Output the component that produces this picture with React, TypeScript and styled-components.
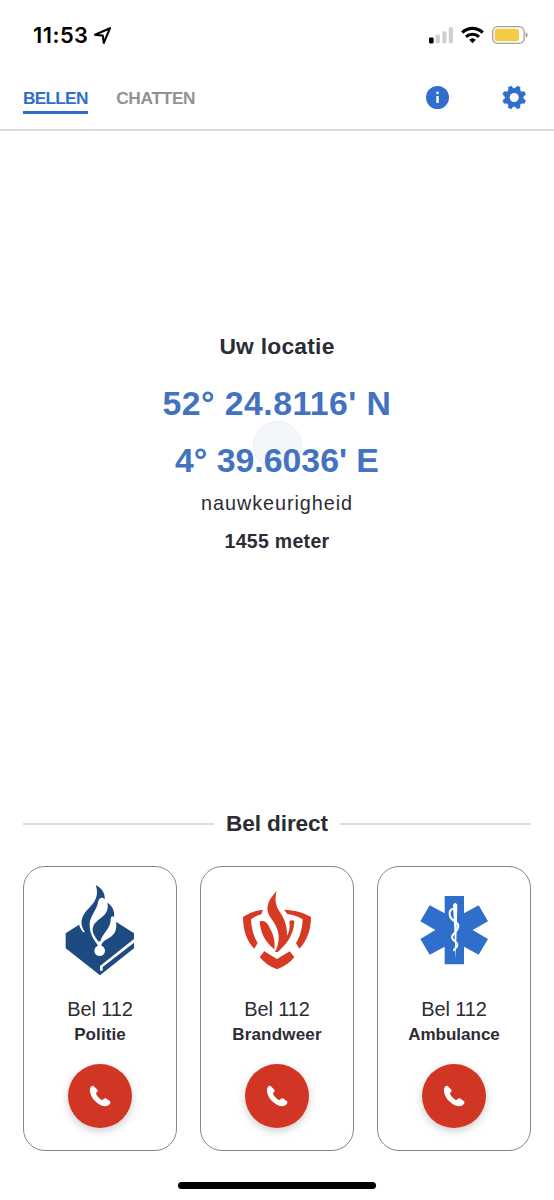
import React from 'react';
import styled, { createGlobalStyle } from 'styled-components';

const GlobalStyle = createGlobalStyle`
  * { box-sizing: border-box; }
  body { margin: 0; background: #fff; }
`;

const BLUE = '#2f6fcb';

const Screen = styled.div`
  width: 554px;
  height: 1200px;
  display: flex;
  flex-direction: column;
  background: #fff;
  overflow: hidden;
  font-family: 'Liberation Sans', Arial, sans-serif;
  color: #2c2c34;
`;

const StatusBar = styled.header`
  height: 70px;
  flex: none;
  display: flex;
  align-items: center;
  justify-content: space-between;
  padding: 0 26px 0 33px;
`;

const Clock = styled.div`
  display: flex;
  align-items: center;
  gap: 5px;
  font: 600 21.8px/28px Inter, sans-serif;
  letter-spacing: 0.5px;
  color: #000;
`;

const Indicators = styled.div`
  display: flex;
  align-items: center;
  gap: 8px;
`;

const NavBar = styled.nav`
  height: 61px;
  flex: none;
  display: flex;
  align-items: flex-start;
  padding: 15px 28px 0 23px;
  border-bottom: 2px solid #dcdcdc;
`;

const Tab = styled.div<{ $active?: boolean; $spacing: number }>`
  height: 29px;
  margin-right: 28.5px;
  font-size: 17.3px;
  font-weight: 700;
  line-height: 26px;
  letter-spacing: ${(p) => p.$spacing}px;
  color: ${(p) => (p.$active ? BLUE : '#929292')};
  border-bottom: 3px solid ${(p) => (p.$active ? BLUE : 'transparent')};
`;

const NavActions = styled.div`
  margin-left: auto;
  display: flex;
  gap: 53px;
`;

const Location = styled.section`
  height: 680px;
  flex: none;
  display: flex;
  flex-direction: column;
  align-items: center;
  padding-top: 200px;
  position: relative;
`;

const Pulse = styled.div`
  position: absolute;
  left: 253px;
  top: 290px;
  width: 49px;
  height: 49px;
  border-radius: 50%;
  background: #f3f7fc;
  border: 1px solid #e9eff8;
`;

const Line = styled.div<{ $size: number; $height: number; $bold?: boolean; $spacing?: number; $color?: string }>`
  position: relative;
  font-size: ${(p) => p.$size}px;
  line-height: ${(p) => p.$height}px;
  font-weight: ${(p) => (p.$bold ? 700 : 400)};
  letter-spacing: ${(p) => p.$spacing ?? 0}px;
  color: ${(p) => p.$color ?? 'inherit'};
  white-space: pre;
`;

const Divider = styled.div`
  height: 26px;
  flex: none;
  display: flex;
  align-items: center;
  gap: 12px;
  padding: 0 23px;

  &::before,
  &::after {
    content: '';
    flex: 1;
    height: 2px;
    background: #dedede;
  }
`;

const Cards = styled.section`
  flex: none;
  display: flex;
  gap: 23px;
  padding: 29px 23px 0;
`;

const Card = styled.article`
  width: 154px;
  height: 285px;
  display: flex;
  flex-direction: column;
  align-items: center;
  padding-top: 3px;
  border: 1px solid #868686;
  border-radius: 22px;
`;

const Emblem = styled.svg`
  width: 100px;
  height: 120px;
  flex: none;
  margin-bottom: 6px;
`;

const CallButton = styled.button`
  width: 64px;
  height: 64px;
  flex: none;
  margin-top: 17px;
  padding: 0;
  border: 0;
  border-radius: 50%;
  background: #d13524;
  box-shadow: 0 3px 8px rgba(0, 0, 0, 0.2);
  display: flex;
  align-items: center;
  justify-content: center;
`;

const HomeIndicator = styled.div`
  width: 198px;
  height: 7px;
  margin: 31px auto 0;
  border-radius: 4px;
  background: #000;
`;

const LocationArrow = () => (
  <svg width="19" height="19" viewBox="0 0 19 19">
    <path d="M2 8.8 17 2.2 10.8 16.8 9.8 9.6Z" fill="none" stroke="#000" strokeWidth="2.1" strokeLinejoin="round" />
  </svg>
);

const Signal = () => (
  <svg width="24" height="17" viewBox="0 0 24 17">
    <rect x="0" y="10.5" width="4.7" height="6" rx="1.4" fill="#000" />
    <rect x="6.7" y="7.6" width="4.2" height="8.9" rx="1.4" fill="#d0d0d0" />
    <rect x="13.3" y="4.2" width="4.2" height="12.3" rx="1.4" fill="#d0d0d0" />
    <rect x="19.8" y="0.3" width="4.2" height="16.2" rx="1.4" fill="#d0d0d0" />
  </svg>
);

const Wifi = () => (
  <svg width="23" height="18" viewBox="0 0 23 18">
    <path d="M1.3 6.6a14.6 14.6 0 0 1 20.4 0" fill="none" stroke="#000" strokeWidth="3.2" />
    <path d="M5 10.8a9.4 9.4 0 0 1 13 0" fill="none" stroke="#000" strokeWidth="3" />
    <path d="M11.5 17.2 8.2 13.8a4.8 4.8 0 0 1 6.6 0Z" fill="#000" />
  </svg>
);

const Battery = () => (
  <svg width="36" height="18" viewBox="0 0 36 18">
    <rect x="0.7" y="0.7" width="31.4" height="16.6" rx="4.8" fill="none" stroke="#a0a0a2" strokeWidth="1.3" />
    <rect x="2.7" y="2.7" width="24.3" height="12.6" rx="2.8" fill="#f4cb45" />
    <path d="M33.8 6.2c2.2.8 2.2 4.6 0 5.4Z" fill="#8f876e" />
  </svg>
);

const InfoIcon = () => (
  <svg width="24" height="24" viewBox="-0.5 0 24 24">
    <circle cx="12" cy="12.5" r="11.5" fill={BLUE} />
    <circle cx="12" cy="7.9" r="1.3" fill="#fff" />
    <rect x="10.8" y="11" width="2.4" height="7" rx="0.4" fill="#fff" />
  </svg>
);

const polar = (radius: number, degrees: number) => {
  const a = (degrees * Math.PI) / 180;
  return `${(radius * Math.cos(a)).toFixed(2)} ${(radius * Math.sin(a)).toFixed(2)}`;
};

const gearOutline = Array.from({ length: 8 }, (_, i) => {
  const mid = i * 45 + 22.5;
  return `${i ? 'L' : 'M'}${polar(11.8, mid - 8)}L${polar(11.8, mid + 8)}Q${polar(6.6, mid + 22.5)} ${polar(11.8, mid + 37)}`;
}).join('');

const GearIcon = () => (
  <svg width="24" height="24" viewBox="-12.2 -12.5 24 24">
    <path d={`${gearOutline}Z`} fill={BLUE} stroke={BLUE} strokeWidth="0.4" strokeLinejoin="round" />
    <circle r="4.5" fill="#fff" />
  </svg>
);

const PhoneIcon = () => (
  <svg width="22" height="22" viewBox="0 -1 66 66">
    <path
      d="M6 4C10 0 14 1 17 5L25 13C27 15 26 18 24 20C20 23 21 26 24 31C28 36 32 40 37 43C40 45 42 44 44 41C46 38 50 38 53 40L62 47C65 49 65 53 62 57C55 65 42 65 30 57C16 48 7 37 4 24C2 15 2 9 6 4Z"
      fill="#fff"
    />
  </svg>
);

const PoliceEmblem = () => (
  <Emblem viewBox="0 0 300 360" fill="#1d4a80">
    <path d="M47 190 87 164 198 155 252 190V235L150 316 47 235Z" />
    <path d="M150 288 252 207V218L158 291V302H150Z" fill="#fff" />
    <path d="M86 160C90 176 96 186 106 190L131 208 145 228H154C155 214 168 210 182 201C197 191 201 176 198 154L150 110Z" fill="#fff" />
    <path d="M137 45C154 54 166 68 164 88C155 79 147 84 144 97C140 121 120 139 119 162C118 180 124 195 132 210L118 212 99 191 104 185C94 172 88 150 106 127C122 107 152 87 137 45Z" />
    <path d="M172 98C188 108 195 124 192 142C186 135 182 141 182 151C181 178 156 190 151 216H146C134 199 122 184 131 166C142 144 181 137 172 98Z" />
    <circle cx="149" cy="242" r="16" fill="#fff" />
    <path d="M145 214H153V230H145Z" fill="#fff" />
  </Emblem>
);

const FireEmblem = () => (
  <Emblem viewBox="0 0 300 360" fill="#d63a25">
    <path d="M48 141C68 128 88 121 108 119L103 133C91 136 80 142 72 148C73 177 81 202 92 219L82 236C59 214 48 180 48 141Z" />
    <path d="M171 119C201 120 229 127 252 141C252 180 239 214 217 236L207 219C218 202 226 177 227 148C212 139 197 134 181 132Z" />
    <path d="M149 63C118 95 115 120 130 142C145 163 156 180 155 205C154 225 150 235 144 246H152C178 224 200 197 202 154C197 149 191 151 187 155C190 172 187 186 180 197C181 165 171 145 158 125C146 107 142 90 149 63Z" />
    <path d="M98 154C111 151 120 156 125 167C135 187 146 205 142 238C116 217 100 190 98 154Z" />
    <path d="M112 244 150 267 188 244 202 261C189 278 172 290 150 298C128 290 111 277 98 261Z" />
  </Emblem>
);

const AmbulanceEmblem = () => (
  <Emblem viewBox="0 0 300 360" fill={BLUE}>
    <path d="M122 78H180V130L224 106 252 154 206 180 252 207 224 254 180 230V283H122V230L77 254 49 207 94 180 49 154 77 106 122 130Z" />
    <path d="M147 104Q153 94 160 104L158 180 155 267 151 180Z" fill="#fff" />
    <path
      d="M153 119C142 113 134 123 138 138C141 155 165 153 163 170C161 187 144 189 144 202C145 214 162 214 160 226C159 234 152 234 150 241"
      fill="none"
      stroke="#fff"
      strokeWidth="6"
      strokeLinecap="round"
    />
  </Emblem>
);

const services = [
  { name: 'Politie', spacing: 0.1, Icon: PoliceEmblem },
  { name: 'Brandweer', spacing: 0.2, Icon: FireEmblem },
  { name: 'Ambulance', spacing: 0, Icon: AmbulanceEmblem },
];

export default function App() {
  return (
    <Screen>
      <GlobalStyle />
      <StatusBar>
        <Clock>
          11:53
          <LocationArrow />
        </Clock>
        <Indicators>
          <Signal />
          <Wifi />
          <Battery />
        </Indicators>
      </StatusBar>
      <NavBar>
        <Tab $active $spacing={-0.75}>BELLEN</Tab>
        <Tab $spacing={-0.3}>CHATTEN</Tab>
        <NavActions>
          <InfoIcon />
          <GearIcon />
        </NavActions>
      </NavBar>
      <Location>
        <Pulse />
        <Line $size={22.8} $height={30} $bold $spacing={0.25}>Uw locatie</Line>
        <Line $size={33.8} $height={84} $bold $spacing={0.45} $color="#4272c0">52° 24.8116' N</Line>
        <Line $size={33.8} $height={30} $bold $spacing={0} $color="#4272c0">4° 39.6036' E</Line>
        <Line $size={19.8} $height={56} $spacing={0.95}>nauwkeurigheid</Line>
        <Line $size={19.5} $height={20} $bold $spacing={0.3}>1455 meter</Line>
      </Location>
      <Divider>
        <Line $size={22.6} $height={26} $bold $spacing={-0.1}>Bel direct</Line>
      </Divider>
      <Cards>
        {services.map(({ name, spacing, Icon }) => (
          <Card key={name}>
            <Icon />
            <Line $size={20} $height={26} $spacing={-0.15}>Bel 112</Line>
            <Line $size={17} $height={25} $bold $spacing={spacing}>{name}</Line>
            <CallButton aria-label={`Bel ${name}`}>
              <PhoneIcon />
            </CallButton>
          </Card>
        ))}
      </Cards>
      <HomeIndicator />
    </Screen>
  );
}
